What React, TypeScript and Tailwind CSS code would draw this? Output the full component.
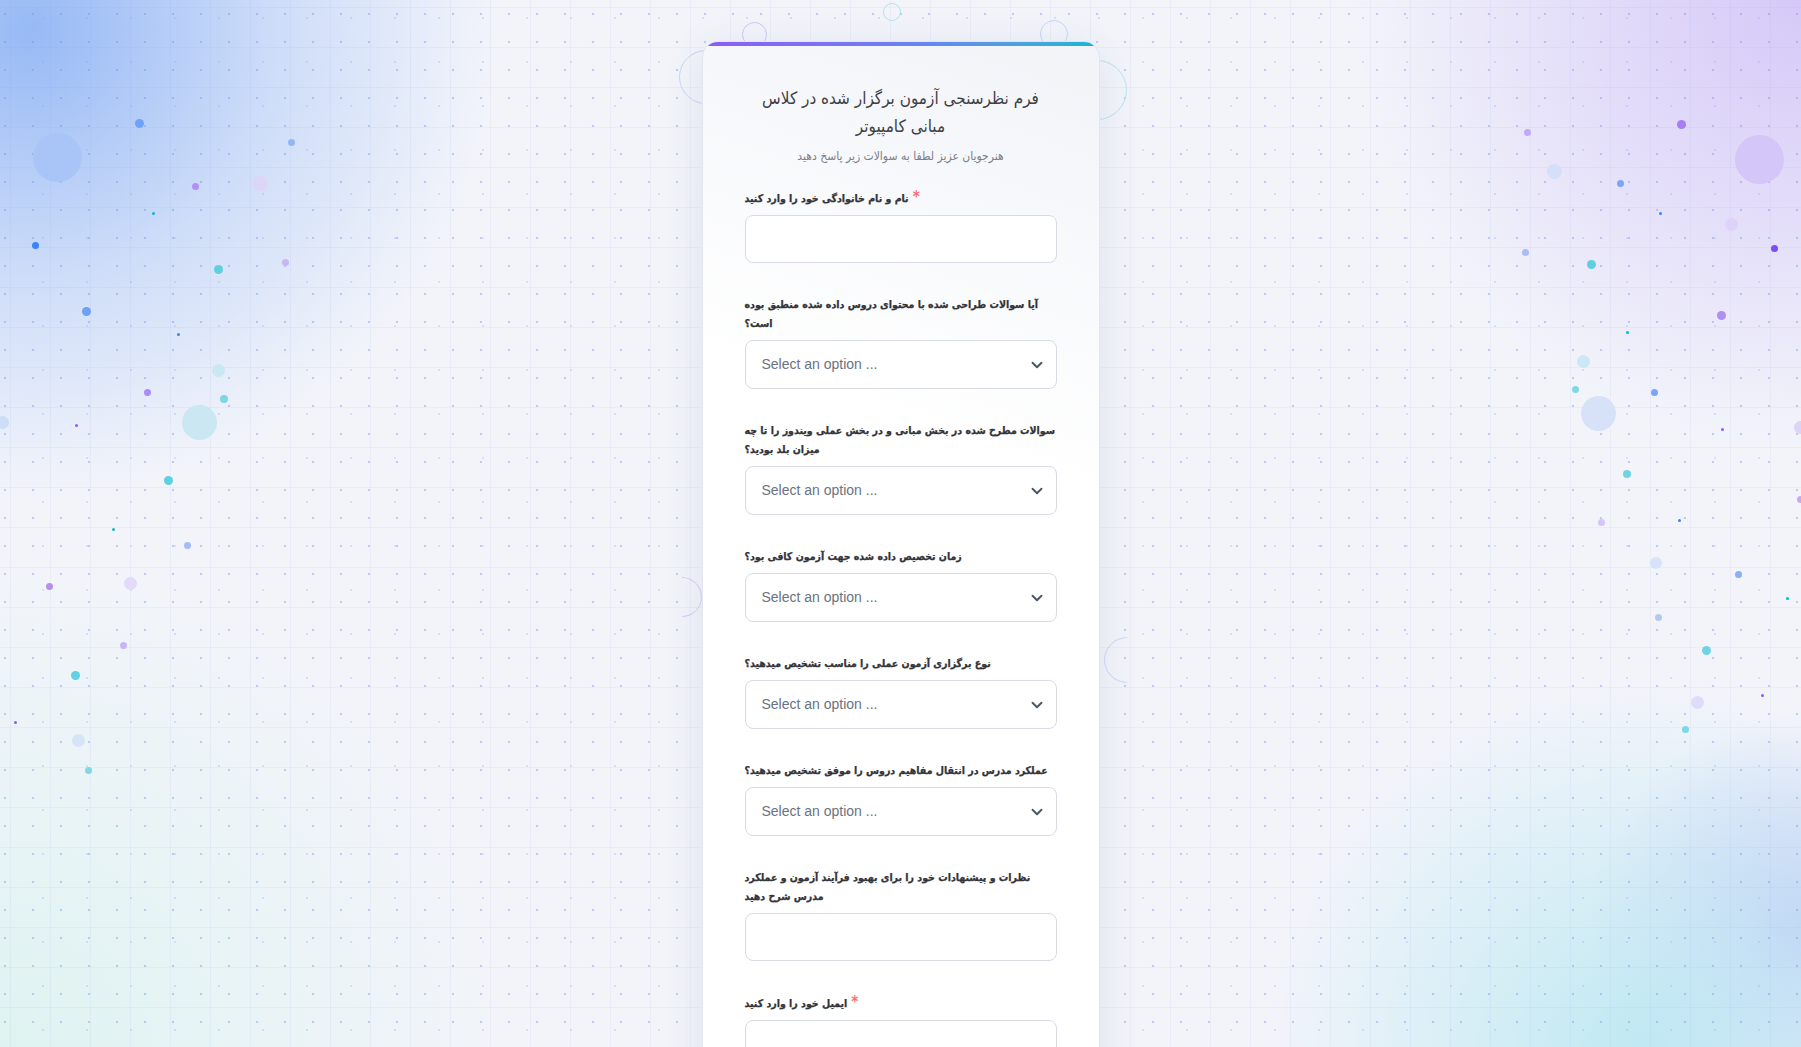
import { ChevronDown } from "lucide-react";

// Survey form over a soft gradient canvas with scattered particles.

const fa = "font-['DejaVu_Sans_Condensed','DejaVu_Sans',sans-serif] [font-stretch:condensed]";

type Dot = [number, number, number, string];

const particles: Dot[] = [
  [139, 123, 9, "#6ea2f6"],
  [57, 157, 49, "#a9c5f8"],
  [291, 142, 7, "#93b6f7"],
  [195, 186, 7, "#b48ef5"],
  [260, 183, 15, "#ddd5f8"],
  [153, 213, 3, "#06b6d4"],
  [80, 224, 13, "#c3d6f7"],
  [35, 245, 7, "#3b82f6"],
  [218, 269, 9, "#5fcfe0"],
  [285, 262, 7, "#c9b6f5"],
  [86, 311, 9, "#6ea0f5"],
  [178, 334, 3, "#3b82f6"],
  [218, 370, 13, "#c9e8f3"],
  [147, 392, 7, "#a98cf8"],
  [224, 399, 8, "#7dd6e4"],
  [2, 422, 13, "#cddcf7"],
  [76, 425, 3, "#8b5cf6"],
  [199, 422, 35, "#cbe7f2"],
  [168, 480, 9, "#5fd0df"],
  [113, 529, 3, "#06b6d4"],
  [187, 545, 7, "#a3bcf5"],
  [49, 586, 7, "#b58ef3"],
  [130, 583, 13, "#e2daf8"],
  [123, 645, 7, "#c9b5f5"],
  [75, 675, 9, "#62d1e0"],
  [15, 722, 3, "#8b5cf6"],
  [78, 740, 13, "#d7e3f7"],
  [88, 770, 7, "#80d9e5"],
  [1527, 132, 7, "#c4a8f7"],
  [1681, 124, 9, "#a67ef5"],
  [1759, 159, 49, "#d4c6f8"],
  [1554, 171, 15, "#d6dff9"],
  [1620, 183, 7, "#7aa6f5"],
  [1660, 213, 3, "#3b82f6"],
  [1731, 224, 13, "#ddd3f8"],
  [1774, 248, 7, "#7c4ef0"],
  [1525, 252, 7, "#a7bef5"],
  [1591, 264, 9, "#5ecfe0"],
  [1721, 315, 9, "#b08ef5"],
  [1627, 332, 3, "#06b6d4"],
  [1583, 361, 13, "#cde8f4"],
  [1575, 389, 7, "#80d8e6"],
  [1654, 392, 7, "#7aa6f5"],
  [1598, 413, 35, "#d7e1f8"],
  [1722, 429, 3, "#8b5cf6"],
  [1800, 427, 13, "#ddd2f8"],
  [1627, 474, 8, "#6fd3e2"],
  [1800, 499, 7, "#c4a8f7"],
  [1601, 522, 7, "#d4c4f7"],
  [1679, 520, 3, "#3b82f6"],
  [1656, 563, 12, "#d8e2f8"],
  [1738, 574, 7, "#8cb0f5"],
  [1787, 598, 3, "#06b6d4"],
  [1658, 617, 7, "#b3c9f5"],
  [1706, 650, 9, "#6fd3e2"],
  [1762, 695, 3, "#8b5cf6"],
  [1697, 702, 13, "#e0dbf8"],
  [1685, 729, 7, "#7fd8e4"],
];

// outline rings peeking out from behind the card; "half" ones only show one side
type Ring = [number, number, number, string, "full" | "right" | "left"];
const rings: Ring[] = [
  [892, 12, 18, "#b3e3ee", "full"],
  [754, 34, 25, "#d3c5f7", "full"],
  [1054, 34, 28, "#c7d6f7", "full"],
  [706, 77, 54, "#cad8f6", "left"],
  [1097, 90, 60, "#bfe4ee", "right"],
  [682, 597, 40, "#dacdf7", "right"],
  [1127, 660, 46, "#cdd9f6", "left"],
];

const ringSide = {
  full: "",
  right: "rotate-45 border-b-transparent! border-l-transparent!",
  left: "rotate-45 border-t-transparent! border-r-transparent!",
};

const questions: { label: string; kind: "input" | "select"; required?: boolean }[] = [
  { label: "نام و نام خانوادگی خود را وارد کنید", kind: "input", required: true },
  { label: "آیا سوالات طراحی شده با محتوای دروس داده شده منطبق بوده است؟", kind: "select" },
  { label: "سوالات مطرح شده در بخش مبانی و در بخش عملی ویندوز را تا چه میزان بلد بودید؟", kind: "select" },
  { label: "زمان تخصیص داده شده جهت آزمون کافی بود؟", kind: "select" },
  { label: "نوع برگزاری آزمون عملی را مناسب تشخیص میدهید؟", kind: "select" },
  { label: "عملکرد مدرس در انتقال مفاهیم دروس را موفق تشخیص میدهید؟", kind: "select" },
  { label: "نظرات و پیشنهادات خود را برای بهبود فرآیند آزمون و عملکرد مدرس شرح دهید", kind: "input" },
  { label: "ایمیل خود را وارد کنید", kind: "input", required: true },
];

export default function App() {
  return (
    <div className="relative h-screen w-full overflow-hidden bg-[#f2f4fa]">
      <div className="absolute inset-0 bg-[radial-gradient(circle_620px_at_30px_30px,rgba(146,182,245,0.95),rgba(170,198,247,0.5)_40%,transparent_75%),radial-gradient(circle_620px_at_1801px_0px,rgba(212,198,248,0.95),transparent_72%),radial-gradient(circle_520px_at_1640px_1060px,rgba(188,232,242,0.95),transparent_72%),radial-gradient(circle_300px_at_1801px_930px,rgba(192,202,246,0.9),transparent_72%),radial-gradient(circle_700px_at_0px_1060px,rgba(220,243,240,0.9),transparent_70%)]" />
      <div className="absolute inset-0 bg-[linear-gradient(to_right,rgba(120,140,220,0.07)_1px,transparent_1px),linear-gradient(to_bottom,rgba(120,140,220,0.07)_1px,transparent_1px)] bg-[length:40px_40px] bg-[position:10px_7px]" />
      <div className="absolute inset-0 bg-[radial-gradient(circle,rgba(110,145,240,0.4)_1px,transparent_1.6px)] bg-[length:28px_28px] bg-[position:-9px_0px]" />
      <div className="absolute inset-0 bg-[radial-gradient(circle,rgba(130,160,240,0.25)_0.8px,transparent_1.3px)] bg-[length:44px_44px] bg-[position:21px_-4px]" />

      {particles.map(([x, y, d, c], i) => (
        <span
          key={i}
          className="absolute rounded-full"
          style={{ left: x - d / 2, top: y - d / 2, width: d, height: d, background: c }}
        />
      ))}
      {rings.map(([x, y, d, c, side], i) => (
        <span
          key={"r" + i}
          className={`absolute rounded-full border-[1.5px] ${ringSide[side]}`}
          style={{ left: x - d / 2, top: y - d / 2, width: d, height: d, borderColor: c }}
        />
      ))}

      <div className="relative z-10 pt-[41px]">
        <div className="mx-auto w-[398px] overflow-hidden rounded-2xl border border-[#e3e6ee] bg-[linear-gradient(200deg,#f1f3f8_0%,#ffffff_38%)] shadow-[0_8px_40px_rgba(60,70,110,0.10)]">
          <div className="h-1 bg-gradient-to-r from-[#8b5cf6] via-[#6d7ff0] to-[#06b6d4]" />
          <div className="px-[42px] pt-[38px] pb-10">
            <h1 className={`${fa} text-center text-[17px] leading-[28px] font-normal text-[#3f3f44]`}>
              فرم نظرسنجی آزمون برگزار شده در کلاس مبانی کامپیوتر
            </h1>
            <p className={`${fa} mt-2 text-center text-[12px] leading-4 text-[#7b7f88]`}>
              هنرجویان عزیز لطفا به سوالات زیر پاسخ دهید
            </p>
            <form className="mt-6 flex flex-col gap-8">
              {questions.map((q, i) => (
                <div key={i}>
                  <label className={`${fa} mb-[7px] block text-[10.5px] leading-[19px] font-bold text-[#333338] [-webkit-text-stroke:0.25px_#333338]`}>
                    {q.label}
                    {q.required && <span className="ml-1 text-[15px] text-[#f87171] [-webkit-text-stroke:0]">*</span>}
                  </label>
                  {q.kind === "input" ? (
                    <div className="h-12 rounded-lg border border-[#d8dbe6] bg-white" />
                  ) : (
                    <div className="flex h-[49px] items-center justify-between rounded-lg border border-[#d8dbe6] bg-white pr-[10px] pl-4">
                      <span className="font-['Liberation_Sans',sans-serif] text-[14px] text-[#6b7280]">Select an option ...</span>
                      <ChevronDown size={18} strokeWidth={2.5} className="text-[#4b5563]" />
                    </div>
                  )}
                </div>
              ))}
            </form>
          </div>
        </div>
      </div>
    </div>
  );
}
